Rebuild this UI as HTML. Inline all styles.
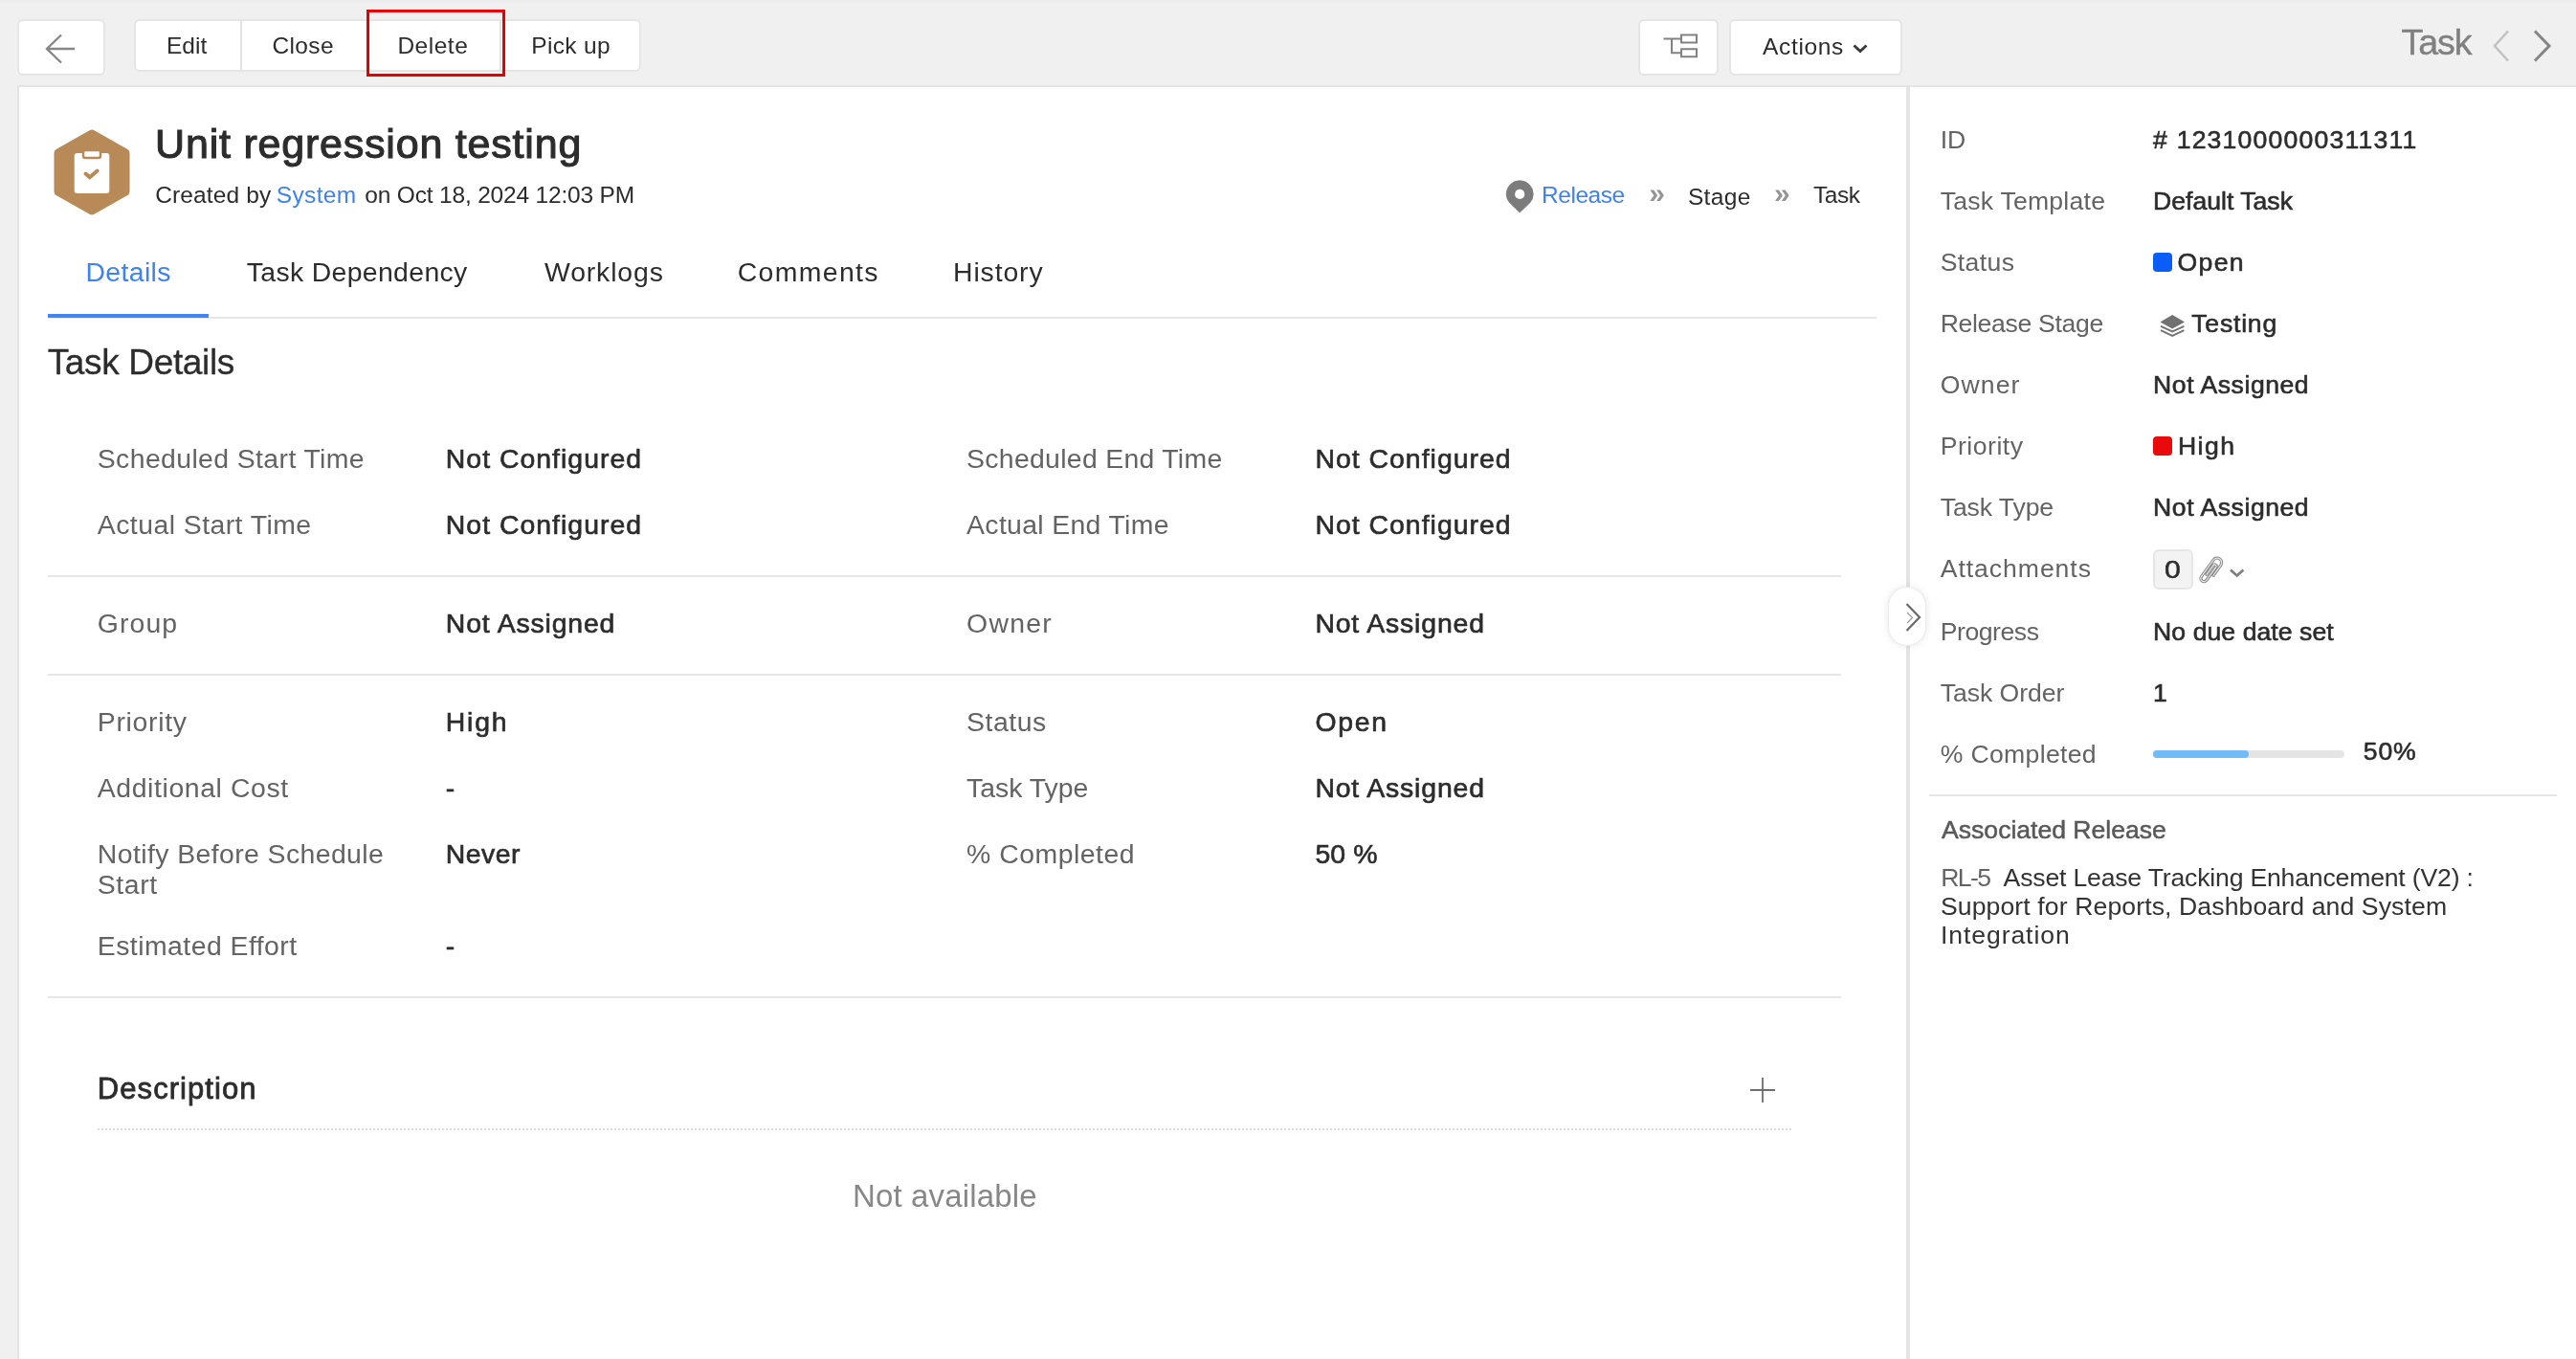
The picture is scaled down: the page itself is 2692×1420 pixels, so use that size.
<!DOCTYPE html>
<html lang="en"><head><meta charset="utf-8"><title>Unit regression testing - Task</title><style>
*{margin:0;padding:0;box-sizing:border-box}
html,body{width:2692px;height:1420px;overflow:hidden;background:#f0f0f0;font-family:"Liberation Sans",sans-serif}
body{position:relative}
.page{position:absolute;left:0;top:0;width:2692px;height:1420px;will-change:transform}
.t{position:absolute;white-space:nowrap;font-weight:400;font-style:normal;display:block}
h1,h2,h3,h4{font-weight:400}
.bar{position:absolute;left:0;top:0;width:2692px;height:89px;background:linear-gradient(#ebebeb,#f0f0f0 4px)}
.btn,.grp{position:absolute;background:#fff;border:2px solid #e5e5e5;border-radius:6px;display:block}
.grp i{position:absolute;top:-2px;width:2px;height:55px;background:#e3e3e3}
.hl{position:absolute;border:3px solid #e60000}
.main{position:absolute;left:18px;top:89px;width:1974px;height:1331px;background:#fff;border-left:2px solid #e4e4e4;border-top:2px solid #e4e4e4}
.side{position:absolute;left:1996px;top:89px;width:696px;height:1331px;background:#fff;border-top:2px solid #e4e4e4}
.vdiv{position:absolute;left:1992px;top:89px;width:4px;height:1331px;background:#e4e4e4}
.handle{position:absolute;left:1974px;top:614px;width:38px;height:60px;border-radius:19px;background:#fff;box-shadow:0 0 0 1px #ececec,0 0 10px rgba(0,0,0,.12)}
.hr{position:absolute;height:2px;background:#e6e6e6}
.tabline{position:absolute;height:2px;background:#e6e6e6}
.tabsel{position:absolute;height:4px;background:#4285f4}
.dot{position:absolute;height:2px;background:repeating-linear-gradient(90deg,#dcdcdc 0 2px,transparent 2px 4px)}
.sq{position:absolute;width:20px;height:20px;border-radius:4px;display:block}
.cnt{position:absolute;width:42px;height:42px;border-radius:6px;background:#f3f3f3;border:2px solid #e6e6e6;display:block}
.pbar{position:absolute;width:200px;height:8px;border-radius:4px;background:#e4e4e4}
.pbar b{display:block;width:100px;height:8px;border-radius:4px;background:#70bbf8}
</style></head>
<body>
<div class="page">
<header class="bar">
<a class="btn" style="left:18px;top:20px;width:92px;height:59px"><svg width="40" height="36" viewBox="0 0 40 36" style="position:absolute;left:25px;top:11px"><path d="M33 18H4M19 3.5L4 18l15 14.5" fill="none" stroke="#878787" stroke-width="2.4"/></svg></a>
<nav class="grp" style="left:140px;top:20px;width:530px;height:55px"><i style="left:109px"></i><i style="left:241px"></i><i style="left:380px"></i></nav>
<span class="t" style="left:174.0px;top:36px;font-size:24.5px;line-height:24.5px;color:#2c2c2c;letter-spacing:0.03px;">Edit</span>
<span class="t" style="left:284.5px;top:36px;font-size:24.5px;line-height:24.5px;color:#2c2c2c;letter-spacing:0.35px;">Close</span>
<span class="t" style="left:415.4px;top:36px;font-size:24.5px;line-height:24.5px;color:#2c2c2c;letter-spacing:0.52px;">Delete</span>
<span class="t" style="left:555.3px;top:36px;font-size:24.5px;line-height:24.5px;color:#2c2c2c;letter-spacing:0.32px;">Pick up</span>
<div class="hl" style="left:383px;top:10px;width:145px;height:70px"></div>
<a class="btn" style="left:1712px;top:20px;width:84px;height:59px"><svg width="40" height="30" viewBox="0 0 40 30" style="position:absolute;left:24px;top:12px"><path d="M0.500 6.600H19M9 6.600V21.200h10M19 2.600h16v8H19zM19 17.200h16v8H19z" fill="none" stroke="#828282" stroke-width="2"/></svg></a>
<a class="btn" style="left:1807px;top:20px;width:181px;height:59px"><svg width="20" height="12" viewBox="0 0 20 12" style="position:absolute;left:125.500px;top:23px"><path d="M2.500 2.500l6.500 6 6.500-6" fill="none" stroke="#3a3a3a" stroke-width="3"/></svg></a>
<span class="t" style="left:1842.0px;top:37px;font-size:24.5px;line-height:24.5px;color:#2c2c2c;letter-spacing:0.67px;">Actions</span>
<span class="t" style="left:2509.6px;top:26px;font-size:37.6px;line-height:37.6px;color:#808080;letter-spacing:-1.10px;-webkit-text-stroke:0.4px #808080;">Task</span>
<svg width="70" height="40" viewBox="0 0 70 40" style="position:absolute;left:2600px;top:28px"><path d="M21 4.500L7 20l14 15.500" fill="none" stroke="#c2c2c2" stroke-width="2.6"/><path d="M49 4.500L64 20 49 35.500" fill="none" stroke="#858585" stroke-width="3"/></svg>
</header>
<main class="main">
</main>
<aside class="side"></aside>
<svg width="84" height="94" viewBox="0 0 84 94" style="position:absolute;left:54px;top:133px"><path d="M42 7.500 L76.500 27 V67 L42 86.500 L7.500 67 V27 Z" fill="#b88a57" stroke="#b88a57" stroke-width="10" stroke-linejoin="round"/><rect x="23.700" y="27" width="36.600" height="42" rx="3" fill="#fff"/><rect x="33" y="24" width="18" height="8" rx="2" fill="#fff" stroke="#b88a57" stroke-width="2.500"/><path d="M35.500 48.500l4.300 3.800 7.800-6.700" fill="none" stroke="#b88a57" stroke-width="4" stroke-linecap="round" stroke-linejoin="round"/></svg>
<h1 class="t" style="left:162.1px;top:129px;font-size:43px;line-height:43px;color:#2c2c2c;letter-spacing:0.79px;-webkit-text-stroke:1.1px #2c2c2c;">Unit regression testing</h1>
<span class="t" style="left:162.2px;top:192px;font-size:24.5px;line-height:24.5px;color:#2c2c2c;letter-spacing:0.14px;">Created by</span>
<span class="t" style="left:288.7px;top:192px;font-size:24.5px;line-height:24.5px;color:#3d82f0;letter-spacing:0.38px;">System</span>
<span class="t" style="left:381.3px;top:192px;font-size:24.5px;line-height:24.5px;color:#2c2c2c;letter-spacing:-0.18px;">on Oct 18, 2024 12:03 PM</span>
<svg width="30" height="36" viewBox="0 0 30 36" style="position:absolute;left:1573px;top:187px"><path d="M15.200 35L5.560 25.850A14 14 0 1 1 24.840 25.850Z" fill="#7c7c7c" stroke="#7c7c7c" stroke-width="0.800" stroke-linejoin="round"/><circle cx="15.200" cy="15.900" r="5.100" fill="#fff"/></svg>
<span class="t" style="left:1611.0px;top:192px;font-size:24.5px;line-height:24.5px;color:#3d82f0;letter-spacing:-0.45px;">Release</span>
<span class="t" style="left:1723.3px;top:187px;font-size:30px;line-height:30px;color:#969696;font-weight:700;">»</span>
<span class="t" style="left:1763.9px;top:194px;font-size:24.5px;line-height:24.5px;color:#2c2c2c;letter-spacing:0.35px;">Stage</span>
<span class="t" style="left:1853.9px;top:187px;font-size:30px;line-height:30px;color:#969696;font-weight:700;">»</span>
<span class="t" style="left:1895.0px;top:192px;font-size:24.5px;line-height:24.5px;color:#2c2c2c;letter-spacing:-0.47px;">Task</span>
<div class="tabline" style="left:50px;top:331px;width:1911px"></div><div class="tabsel" style="left:50px;top:328px;width:168px"></div>
<span class="t" style="left:89.4px;top:270px;font-size:28.4px;line-height:28.4px;color:#3d82f0;letter-spacing:0.38px;">Details</span>
<span class="t" style="left:257.8px;top:270px;font-size:28.4px;line-height:28.4px;color:#2c2c2c;letter-spacing:0.34px;">Task Dependency</span>
<span class="t" style="left:569.0px;top:270px;font-size:28.4px;line-height:28.4px;color:#2c2c2c;letter-spacing:0.86px;">Worklogs</span>
<span class="t" style="left:770.7px;top:270px;font-size:28.4px;line-height:28.4px;color:#2c2c2c;letter-spacing:1.37px;">Comments</span>
<span class="t" style="left:996.0px;top:270px;font-size:28.4px;line-height:28.4px;color:#2c2c2c;letter-spacing:0.88px;">History</span>
<h2 class="t" style="left:49.7px;top:360px;font-size:37px;line-height:37px;color:#2c2c2c;letter-spacing:-0.35px;-webkit-text-stroke:0.3px #2c2c2c;">Task Details</h2>
<span class="t" style="left:101.8px;top:465px;font-size:28.4px;line-height:28.4px;color:#636363;letter-spacing:0.39px;">Scheduled Start Time</span>
<span class="t" style="left:465.8px;top:465px;font-size:28.4px;line-height:28.4px;color:#2c2c2c;letter-spacing:1.02px;-webkit-text-stroke:0.65px #2c2c2c;">Not Configured</span>
<span class="t" style="left:1010.1px;top:465px;font-size:28.4px;line-height:28.4px;color:#636363;letter-spacing:0.30px;">Scheduled End Time</span>
<span class="t" style="left:1374.4px;top:465px;font-size:28.4px;line-height:28.4px;color:#2c2c2c;letter-spacing:1.02px;-webkit-text-stroke:0.65px #2c2c2c;">Not Configured</span>
<span class="t" style="left:101.8px;top:534px;font-size:28.4px;line-height:28.4px;color:#636363;letter-spacing:0.45px;">Actual Start Time</span>
<span class="t" style="left:465.8px;top:534px;font-size:28.4px;line-height:28.4px;color:#2c2c2c;letter-spacing:1.02px;-webkit-text-stroke:0.65px #2c2c2c;">Not Configured</span>
<span class="t" style="left:1010.1px;top:534px;font-size:28.4px;line-height:28.4px;color:#636363;letter-spacing:0.33px;">Actual End Time</span>
<span class="t" style="left:1374.4px;top:534px;font-size:28.4px;line-height:28.4px;color:#2c2c2c;letter-spacing:1.02px;-webkit-text-stroke:0.65px #2c2c2c;">Not Configured</span>
<div class="hr" style="left:50px;top:601px;width:1874px"></div>
<span class="t" style="left:101.8px;top:637px;font-size:28.4px;line-height:28.4px;color:#636363;letter-spacing:1.10px;">Group</span>
<span class="t" style="left:465.8px;top:637px;font-size:28.4px;line-height:28.4px;color:#2c2c2c;letter-spacing:0.84px;-webkit-text-stroke:0.65px #2c2c2c;">Not Assigned</span>
<span class="t" style="left:1010.1px;top:637px;font-size:28.4px;line-height:28.4px;color:#636363;letter-spacing:1.25px;">Owner</span>
<span class="t" style="left:1374.4px;top:637px;font-size:28.4px;line-height:28.4px;color:#2c2c2c;letter-spacing:0.84px;-webkit-text-stroke:0.65px #2c2c2c;">Not Assigned</span>
<div class="hr" style="left:50px;top:704px;width:1874px"></div>
<span class="t" style="left:101.8px;top:740px;font-size:28.4px;line-height:28.4px;color:#636363;letter-spacing:0.69px;">Priority</span>
<span class="t" style="left:465.8px;top:740px;font-size:28.4px;line-height:28.4px;color:#2c2c2c;letter-spacing:1.80px;-webkit-text-stroke:0.65px #2c2c2c;">High</span>
<span class="t" style="left:1010.1px;top:740px;font-size:28.4px;line-height:28.4px;color:#636363;letter-spacing:0.54px;">Status</span>
<span class="t" style="left:1374.4px;top:740px;font-size:28.4px;line-height:28.4px;color:#2c2c2c;letter-spacing:1.70px;-webkit-text-stroke:0.65px #2c2c2c;">Open</span>
<span class="t" style="left:101.8px;top:809px;font-size:28.4px;line-height:28.4px;color:#636363;letter-spacing:0.60px;">Additional Cost</span>
<span class="t" style="left:465.8px;top:809px;font-size:28.4px;line-height:28.4px;color:#2c2c2c;-webkit-text-stroke:0.65px #2c2c2c;">-</span>
<span class="t" style="left:1010.1px;top:809px;font-size:28.4px;line-height:28.4px;color:#636363;">Task Type</span>
<span class="t" style="left:1374.4px;top:809px;font-size:28.4px;line-height:28.4px;color:#2c2c2c;letter-spacing:0.84px;-webkit-text-stroke:0.65px #2c2c2c;">Not Assigned</span>
<span class="t" style="left:101.8px;top:878px;font-size:28.4px;line-height:28.4px;color:#636363;letter-spacing:0.41px;">Notify Before Schedule</span>
<span class="t" style="left:101.8px;top:910px;font-size:28.4px;line-height:28.4px;color:#636363;letter-spacing:0.60px;">Start</span>
<span class="t" style="left:465.8px;top:878px;font-size:28.4px;line-height:28.4px;color:#2c2c2c;letter-spacing:0.50px;-webkit-text-stroke:0.65px #2c2c2c;">Never</span>
<span class="t" style="left:1010.1px;top:878px;font-size:28.4px;line-height:28.4px;color:#636363;letter-spacing:0.50px;">% Completed</span>
<span class="t" style="left:1374.4px;top:878px;font-size:28.4px;line-height:28.4px;color:#2c2c2c;letter-spacing:0.17px;-webkit-text-stroke:0.65px #2c2c2c;">50 %</span>
<span class="t" style="left:101.8px;top:974px;font-size:28.4px;line-height:28.4px;color:#636363;letter-spacing:0.46px;">Estimated Effort</span>
<span class="t" style="left:465.8px;top:974px;font-size:28.4px;line-height:28.4px;color:#2c2c2c;-webkit-text-stroke:0.65px #2c2c2c;">-</span>
<div class="hr" style="left:50px;top:1041px;width:1874px"></div>
<h3 class="t" style="left:101.8px;top:1122px;font-size:31px;line-height:31px;color:#2c2c2c;letter-spacing:1.07px;-webkit-text-stroke:0.8px #2c2c2c;">Description</h3>
<svg width="28" height="28" viewBox="0 0 28 28" style="position:absolute;left:1828px;top:1125px"><path d="M14 1v26M1 14h26" fill="none" stroke="#6e6e6e" stroke-width="1.800"/></svg>
<div class="dot" style="left:102px;top:1179px;width:1770px"></div>
<span class="t" style="left:891.0px;top:1233px;font-size:33px;line-height:33px;color:#878787;letter-spacing:0.15px;">Not available</span>
<div class="vdiv"></div>
<div class="handle"><svg width="38" height="60" viewBox="0 0 38 60"><path d="M18.500 17L32 31 18.500 45" fill="none" stroke="#6a6a6a" stroke-width="2.200"/><path d="M19 26l5.500 5.500L19 37" fill="none" stroke="#9a9a9a" stroke-width="1.200"/></svg></div>
<span class="t" style="left:2027.7px;top:133px;font-size:26.6px;line-height:26.6px;color:#636363;">ID</span>
<span class="t" style="left:2250.1px;top:133px;font-size:26.6px;line-height:26.6px;color:#2c2c2c;letter-spacing:1.19px;-webkit-text-stroke:0.6px #2c2c2c;"># 1231000000311311</span>
<span class="t" style="left:2027.7px;top:197px;font-size:26.6px;line-height:26.6px;color:#636363;letter-spacing:0.23px;">Task Template</span>
<span class="t" style="left:2250.1px;top:197px;font-size:26.6px;line-height:26.6px;color:#2c2c2c;-webkit-text-stroke:0.6px #2c2c2c;">Default Task</span>
<span class="t" style="left:2027.7px;top:261px;font-size:26.6px;line-height:26.6px;color:#636363;letter-spacing:0.38px;">Status</span>
<i class="sq" style="left:2250px;top:264px;background:#0b5df7"></i>
<span class="t" style="left:2275.6px;top:261px;font-size:26.6px;line-height:26.6px;color:#2c2c2c;letter-spacing:1.30px;-webkit-text-stroke:0.6px #2c2c2c;">Open</span>
<span class="t" style="left:2027.7px;top:325px;font-size:26.6px;line-height:26.6px;color:#636363;letter-spacing:-0.33px;">Release Stage</span>
<svg width="28" height="26" viewBox="0 0 28 26" style="position:absolute;left:2255.500px;top:328px"><path d="M14.200 1L27 8.500 14.200 15.500 1.500 8.500z" fill="#717171"/><path d="M2 12.800L14.200 18.400 26.400 12.800M2 17.200L14.200 23 26.400 17.200" fill="none" stroke="#747474" stroke-width="2"/></svg>
<span class="t" style="left:2290.3px;top:325px;font-size:26.6px;line-height:26.6px;color:#2c2c2c;letter-spacing:0.77px;-webkit-text-stroke:0.6px #2c2c2c;">Testing</span>
<span class="t" style="left:2027.7px;top:389px;font-size:26.6px;line-height:26.6px;color:#636363;letter-spacing:1.10px;">Owner</span>
<span class="t" style="left:2250.1px;top:389px;font-size:26.6px;line-height:26.6px;color:#2c2c2c;letter-spacing:0.53px;-webkit-text-stroke:0.6px #2c2c2c;">Not Assigned</span>
<span class="t" style="left:2027.7px;top:453px;font-size:26.6px;line-height:26.6px;color:#636363;letter-spacing:0.51px;">Priority</span>
<i class="sq" style="left:2250px;top:456px;background:#e90b0b"></i>
<span class="t" style="left:2275.9px;top:453px;font-size:26.6px;line-height:26.6px;color:#2c2c2c;letter-spacing:1.47px;-webkit-text-stroke:0.6px #2c2c2c;">High</span>
<span class="t" style="left:2027.7px;top:517px;font-size:26.6px;line-height:26.6px;color:#636363;letter-spacing:-0.10px;">Task Type</span>
<span class="t" style="left:2250.1px;top:517px;font-size:26.6px;line-height:26.6px;color:#2c2c2c;letter-spacing:0.53px;-webkit-text-stroke:0.6px #2c2c2c;">Not Assigned</span>
<span class="t" style="left:2027.7px;top:581px;font-size:26.6px;line-height:26.6px;color:#636363;letter-spacing:0.95px;">Attachments</span>
<i class="cnt" style="left:2250px;top:574px"></i>
<span class="t" style="left:2262.6px;top:582px;font-size:26.6px;line-height:26.6px;color:#2c2c2c;-webkit-text-stroke:0.5px #2c2c2c;transform:scaleX(1.14);transform-origin:50% 50%;">0</span>
<svg width="30" height="34" viewBox="-15 -17 30 34" style="position:absolute;left:2295.800px;top:578.800px"><g transform="rotate(36)" fill="none" stroke-linecap="round"><path d="M4.700 3V-10.100A4.700 4.700 0 0 0 -4.700 -10.100V11.300A3.300 3.300 0 0 0 1.900 11.300V-5.500A1.700 1.700 0 0 0 -1.500 -5.500V6.500" stroke="#8a8a8a" stroke-width="3.200"/><path d="M4.700 3V-10.100A4.700 4.700 0 0 0 -4.700 -10.100V11.300A3.300 3.300 0 0 0 1.900 11.300V-5.500A1.700 1.700 0 0 0 -1.500 -5.500V6.500" stroke="#f2f2f2" stroke-width="1"/></g></svg>
<svg width="18" height="12" viewBox="0 0 18 12" style="position:absolute;left:2329px;top:592.500px"><path d="M2 2.500l6.700 6 6.700-6" fill="none" stroke="#7e7e7e" stroke-width="2.600"/></svg>
<span class="t" style="left:2027.7px;top:647px;font-size:26.6px;line-height:26.6px;color:#636363;letter-spacing:-0.44px;">Progress</span>
<span class="t" style="left:2250.1px;top:647px;font-size:26.6px;line-height:26.6px;color:#2c2c2c;letter-spacing:0.06px;-webkit-text-stroke:0.6px #2c2c2c;">No due date set</span>
<span class="t" style="left:2027.7px;top:711px;font-size:26.6px;line-height:26.6px;color:#636363;letter-spacing:-0.03px;">Task Order</span>
<span class="t" style="left:2250.1px;top:711px;font-size:26.6px;line-height:26.6px;color:#2c2c2c;-webkit-text-stroke:0.6px #2c2c2c;">1</span>
<span class="t" style="left:2027.7px;top:775px;font-size:26.6px;line-height:26.6px;color:#636363;letter-spacing:0.33px;">% Completed</span>
<div class="pbar" style="left:2250px;top:784px"><b></b></div>
<span class="t" style="left:2469.8px;top:772px;font-size:26.6px;line-height:26.6px;color:#2c2c2c;letter-spacing:0.85px;-webkit-text-stroke:0.6px #2c2c2c;">50%</span>
<div class="hr" style="left:2016px;top:830px;width:656px"></div>
<h4 class="t" style="left:2029.1px;top:854px;font-size:26.6px;line-height:26.6px;color:#585858;letter-spacing:-0.02px;-webkit-text-stroke:0.5px #585858;">Associated Release</h4>
<span class="t" style="left:2028.2px;top:904px;font-size:26.6px;line-height:26.6px;color:#636363;letter-spacing:-1.57px;">RL-5</span>
<span class="t" style="left:2093.6px;top:904px;font-size:26.6px;line-height:26.6px;color:#333;letter-spacing:-0.18px;">Asset Lease Tracking Enhancement (V2) :</span>
<span class="t" style="left:2027.9px;top:934px;font-size:26.6px;line-height:26.6px;color:#333;letter-spacing:0.11px;">Support for Reports, Dashboard and System</span>
<span class="t" style="left:2027.9px;top:964px;font-size:26.6px;line-height:26.6px;color:#333;letter-spacing:0.92px;">Integration</span>
</div>
</body></html>
